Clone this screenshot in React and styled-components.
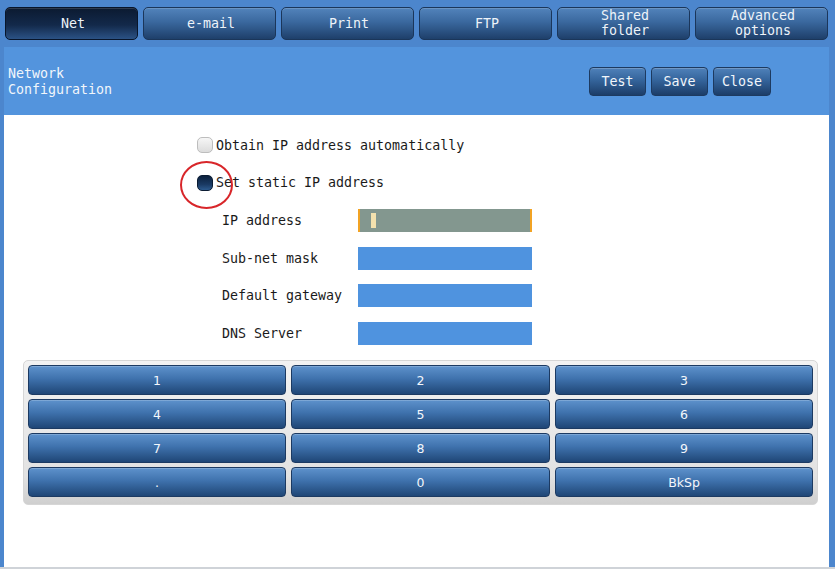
import React from "react";
import styled, { createGlobalStyle } from "styled-components";

const GlobalStyle = createGlobalStyle`
  html, body {
    margin: 0;
    padding: 0;
    overflow: hidden;
    background: #ffffff;
  }
`;

const mono = `"DejaVu Sans Mono", "Liberation Mono", monospace`;
const sans = `"DejaVu Sans", "Liberation Sans", sans-serif`;

const tabs = [
  { label: "Net", active: true },
  { label: "e-mail" },
  { label: "Print" },
  { label: "FTP" },
  { label: "Shared\nfolder" },
  { label: "Advanced\noptions" },
];

const fields = [
  { label: "IP address", focused: true },
  { label: "Sub-net mask" },
  { label: "Default gateway" },
  { label: "DNS Server" },
];

const keys = ["1", "2", "3", "4", "5", "6", "7", "8", "9", ".", "0", "BkSp"];

function App() {
  return (
    <>
      <GlobalStyle />
      <Frame>
        <TabBar>
          {tabs.map((t) => (
            <Tab key={t.label} $active={t.active}>
              {t.label}
            </Tab>
          ))}
        </TabBar>
        <Panel>
          <Header>
            <Title>
              Network
              <br />
              Configuration
            </Title>
            <Actions>
              <ActionButton>Test</ActionButton>
              <ActionButton>Save</ActionButton>
              <ActionButton>Close</ActionButton>
            </Actions>
          </Header>
          <Content>
            <Form>
              <Option>
                <Radio />
                Obtain IP address automatically
              </Option>
              <Option>
                <Radio $checked />
                Set static IP address
                <Mark />
              </Option>
              {fields.map((f) => (
                <Field key={f.label}>
                  <FieldLabel>{f.label}</FieldLabel>
                  <Input $focused={f.focused}>{f.focused && <Caret />}</Input>
                </Field>
              ))}
            </Form>
            <Keypad>
              {keys.map((k) => (
                <Key key={k}>{k}</Key>
              ))}
            </Keypad>
          </Content>
        </Panel>
      </Frame>
    </>
  );
}

const Frame = styled.div`
  width: 835px;
  height: 569px;
  box-sizing: border-box;
  background: #4c86cd;
  border-bottom: 2px solid #cfd3d8;
  display: flex;
  flex-direction: column;
  font-family: ${mono};
`;

const TabBar = styled.div`
  display: flex;
  gap: 5px;
  padding: 7px 7px 0 5px;
  height: 47px;
  box-sizing: border-box;
`;

const Tab = styled.div`
  width: 133px;
  height: 33px;
  box-sizing: border-box;
  border-radius: 5px;
  border: 1px solid ${(p) => (p.$active ? "#08152a" : "#1b365a")};
  background: ${(p) =>
    p.$active
      ? "linear-gradient(#0b1a31 0%, #13294a 55%, #2b5285 100%)"
      : "linear-gradient(#5283bb 0%, #3a689e 45%, #1e3f6a 100%)"};
  box-shadow: inset 0 1px 0 rgba(255, 255, 255, 0.15);
  color: #eef3f9;
  font-size: 13.3px;
  line-height: 15px;
  white-space: pre-line;
  text-align: center;
  display: flex;
  align-items: center;
  justify-content: center;
  padding-left: 3px;
  padding-bottom: 1px;
`;

const Panel = styled.div`
  flex: 1;
  margin: 0 6px 0 4px;
  display: flex;
  flex-direction: column;
  background: #ffffff;
`;

const Header = styled.div`
  height: 68px;
  background: #5394dd;
  display: flex;
  align-items: center;
  justify-content: space-between;
  padding: 0 58px 0 4px;
`;

const Title = styled.div`
  color: #f2f6fb;
  font-size: 13.3px;
  line-height: 16px;
  margin-top: 1px;
`;

const Actions = styled.div`
  display: flex;
  gap: 5px;
`;

const ActionButton = styled.div`
  height: 29px;
  padding: 0 8px;
  min-width: 57px;
  box-sizing: border-box;
  border-radius: 4px;
  border: 1px solid #1d3a60;
  background: linear-gradient(#4f81ba 0%, #34649b 45%, #1c3d68 100%);
  box-shadow: inset 0 1px 0 rgba(255, 255, 255, 0.2);
  color: #f2f6fb;
  font-size: 13.3px;
  display: flex;
  align-items: center;
  justify-content: center;
`;

const Content = styled.div`
  flex: 1;
  display: flex;
  flex-direction: column;
  padding-top: 18px;
`;

const Form = styled.div`
  margin-left: 193px;
  display: flex;
  flex-direction: column;
  gap: 13.7px;
`;

const Option = styled.div`
  position: relative;
  height: 24px;
  display: flex;
  align-items: center;
  gap: 3px;
  color: #1a1a1a;
  font-size: 13.3px;
`;

const Radio = styled.span`
  width: 16px;
  height: 16px;
  border-radius: 5px;
  box-sizing: border-box;
  border: 1px solid ${(p) => (p.$checked ? "#0b1c33" : "#bdbdbd")};
  background: ${(p) =>
    p.$checked
      ? "linear-gradient(#0c213d 0%, #1a3a63 60%, #2d5b8f 100%)"
      : "linear-gradient(#f6f6f6 0%, #dcdcdc 100%)"};
`;

const Mark = styled.span`
  position: absolute;
  left: -17px;
  top: -10px;
  width: 49px;
  height: 44px;
  border: 2px solid #d8262a;
  border-radius: 50%;
`;

const Field = styled.div`
  height: 24px;
  display: flex;
  align-items: center;
  padding-left: 25px;
  color: #1a1a1a;
  font-size: 13.3px;
`;

const FieldLabel = styled.span`
  width: 136px;
`;

const Input = styled.div`
  width: 174px;
  height: 23px;
  box-sizing: border-box;
  background: ${(p) => (p.$focused ? "#83978f" : "#4f93df")};
  border-left: 2px solid ${(p) => (p.$focused ? "#f2a324" : "transparent")};
  border-right: 2px solid ${(p) => (p.$focused ? "#f2a324" : "transparent")};
  display: flex;
  align-items: center;
  padding-left: 11px;
`;

const Caret = styled.span`
  width: 5px;
  height: 15px;
  background: #f3e1ae;
`;

const Keypad = styled.div`
  margin: 15px 11px 0 19px;
  padding: 4px 4px 7px;
  border-radius: 5px;
  border: 1px solid #d6d6d6;
  background: linear-gradient(#f2f2f2 0%, #e2e2e2 80%, #cfcfcf 100%);
  display: grid;
  grid-template-columns: 258px 259px 258px;
  grid-auto-rows: 30px;
  column-gap: 5px;
  row-gap: 4px;
`;

const Key = styled.div`
  border-radius: 4px;
  border: 1px solid #1c3a62;
  background: linear-gradient(#5e92cc 0%, #3f72ad 45%, #1f4676 100%);
  box-shadow: inset 0 1px 0 rgba(255, 255, 255, 0.2);
  color: #f3f7fc;
  font-family: ${sans};
  font-size: 12.5px;
  display: flex;
  align-items: center;
  justify-content: center;
`;

export default App;
